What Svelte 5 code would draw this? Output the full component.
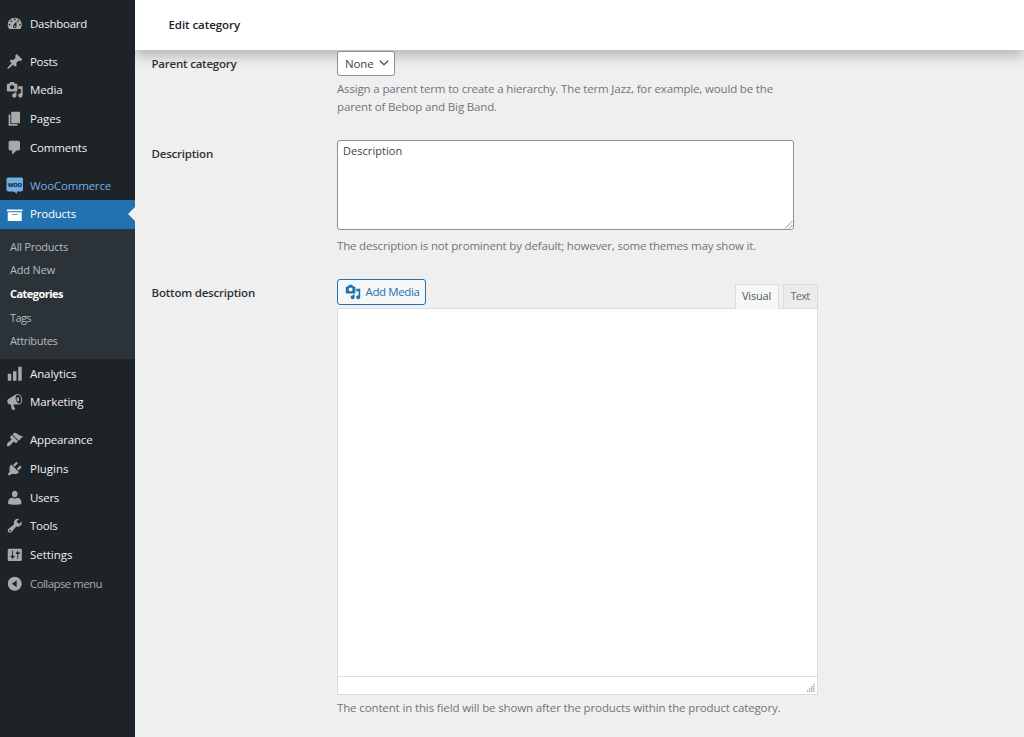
<script lang="ts">
  interface MenuItem {
    label: string;
    icon: string;
    kind?: 'woo' | 'current' | 'collapse';
    gap?: boolean;
    width: number;
  }

  const mediaIcon =
    'M13 11V4c0-.55-.45-1-1-1h-1.67L9 1H5L3.67 3H2c-.55 0-1 .45-1 1v7c0 .55.45 1 1 1h10c.55 0 1-.45 1-1zM7 4.5c1.38 0 2.5 1.12 2.5 2.5S8.38 9.5 7 9.5 4.5 8.38 4.5 7 5.62 4.5 7 4.5zM14 6h5v10.5c0 1.38-1.12 2.5-2.5 2.5S14 17.88 14 16.5s1.12-2.5 2.5-2.5c.17 0 .34.02.5.05V9h-3V6zm-4 8.05V13h2v3.5c0 1.38-1.12 2.5-2.5 2.5S7 17.88 7 16.5 8.12 14 9.5 14c.17 0 .34.02.5.05z';

  const menu: MenuItem[] = [
    {
      label: 'Dashboard',
      width: 57,
      icon: 'M3.76 16h12.48c1.1-1.37 1.76-3.11 1.76-5 0-4.42-3.58-8-8-8s-8 3.58-8 8c0 1.89.66 3.63 1.76 5zM10 4c.55 0 1 .45 1 1s-.45 1-1 1-1-.45-1-1 .45-1 1-1zM6 6c.55 0 1 .45 1 1s-.45 1-1 1-1-.45-1-1 .45-1 1-1zm8 0c.55 0 1 .45 1 1s-.45 1-1 1-1-.45-1-1 .45-1 1-1zm-5.37 5.55L12 7v6c0 1.1-.9 2-2 2s-2-.9-2-2c0-.57.24-1.08.63-1.45zM4 10c.55 0 1 .45 1 1s-.45 1-1 1-1-.45-1-1 .45-1 1-1zm12 0c.55 0 1 .45 1 1s-.45 1-1 1-1-.45-1-1 .45-1 1-1zm-5 3c0-.55-.45-1-1-1s-1 .45-1 1 .45 1 1 1 1-.45 1-1z'
    },
    {
      label: 'Posts',
      width: 27.5,
      gap: true,
      icon: 'M10.44 3.02l1.82-1.82 6.36 6.35-1.83 1.82c-1.05-.68-2.48-.57-3.41.36l-.75.75c-.92.93-1.04 2.35-.35 3.41l-1.83 1.82-2.41-2.41-2.8 2.79c-.42.42-3.38 2.71-3.8 2.29s1.86-3.39 2.28-3.81l2.79-2.79L4.1 9.36l1.83-1.82c1.05.69 2.48.57 3.4-.36l.75-.75c.93-.92 1.05-2.35.36-3.41z'
    },
    { label: 'Media', width: 32.5, icon: mediaIcon },
    { label: 'Pages', width: 31, icon: 'M6 15V2h10v13H6zm-1 1h8v2H3V5h2v11z' },
    {
      label: 'Comments',
      width: 57,
      icon: 'M5 2h9c1.1 0 2 .9 2 2v7c0 1.1-.9 2-2 2h-2l-5 5v-5H5c-1.1 0-2-.9-2-2V4c0-1.1.9-2 2-2z'
    },
    { label: 'WooCommerce', width: 81, kind: 'woo', gap: true, icon: '' },
    {
      label: 'Products',
      width: 46,
      kind: 'current',
      icon: 'M19 4v2H1V4h18zM2 7h16v10H2V7zm11 3V9H7v1h6z'
    },
    { label: 'Analytics', width: 46.5, icon: 'M18 18V2h-4v16h4zm-6 0V7H8v11h4zm-6 0v-8H2v8h4z' },
    {
      label: 'Marketing',
      width: 53.5,
      icon: 'M18.15 5.94c.46 1.62.38 3.22-.02 4.48-.42 1.28-1.26 2.18-2.3 2.48-.16.06-.26.06-.4.06-.06.02-.12.02-.18.02-.06.02-.14.02-.22.02h-6.8l2.22 5.5c.02.14-.06.26-.14.34-.08.1-.24.16-.34.16H6.95c-.1 0-.26-.06-.34-.16-.08-.08-.16-.2-.14-.34l-1-5.5H4.25l-.02-.02c-.5.06-1.08-.18-1.54-.62s-.88-1.08-1.06-1.88c-.24-.8-.2-1.56-.02-2.2.18-.62.58-1.08 1.06-1.3l.02-.02 9-5.4c.1-.06.18-.1.24-.16.06-.04.14-.08.24-.12.16-.08.28-.12.5-.18 1.04-.3 2.24.1 3.22.98s1.84 2.24 2.26 3.86zm-2.58 5.98h-.02c.4-.1.74-.34 1.04-.7.58-.7.86-1.76.86-3.04 0-.64-.1-1.3-.28-1.98-.34-1.36-1.02-2.5-1.78-3.24s-1.68-1.1-2.46-.88c-.82.22-1.4.96-1.7 2-.32 1.04-.28 2.36.06 3.72.38 1.36 1 2.5 1.8 3.24.78.74 1.62 1.1 2.48.88zm-2.54-7.08c.22-.04.42-.02.62.04.38.16.76.48 1.02 1s.42 1.2.42 1.78c0 .3-.04.56-.12.8-.18.48-.44.84-.86.94-.34.1-.8-.06-1.14-.4s-.64-.86-.78-1.5c-.18-.62-.12-1.24.02-1.72s.48-.84.82-.94z'
    },
    {
      label: 'Appearance',
      width: 62.5,
      gap: true,
      icon: 'M14.48 11.06L7.41 3.99l1.5-1.5c.5-.56 2.3-.47 3.51.32 1.21.8 1.43 1.28 2.91 2.1 1.18.64 2.45 1.26 4.45.85zm-.71.71L6.7 4.7 4.93 6.47c-.39.39-.39 1.02 0 1.41l1.06 1.06c.39.39.39 1.03 0 1.42-.6.6-1.43 1.11-2.21 1.69-.35.26-.7.53-1.01.84C1.43 14.23.4 16.08 1.4 17.07c.99 1 2.84-.03 4.18-1.36.31-.31.58-.66.85-1.02.57-.78 1.08-1.61 1.69-2.21.39-.39 1.02-.39 1.41 0l1.06 1.06c.39.39 1.02.39 1.41 0z'
    },
    {
      label: 'Plugins',
      width: 38.5,
      icon: 'M13.11 4.36L9.87 7.6 8 5.73l3.24-3.24c.35-.34 1.05-.2 1.56.32.52.51.66 1.21.31 1.55zm-8 1.77l.91-1.12 9.01 9.01-1.19.84c-.71.71-2.63 1.16-3.82 1.16H6.14L4.9 17.26c-.59.59-1.54.59-2.12 0-.59-.58-.59-1.53 0-2.12l1.24-1.24v-3.88c0-1.13.4-3.19 1.09-3.89zm7.26 3.97l3.24-3.24c.34-.35 1.04-.21 1.55.31.52.51.66 1.21.31 1.55l-3.24 3.25z'
    },
    {
      label: 'Users',
      width: 29,
      icon: 'M10 9.6c-2.4 0-3.2-2.1-3.2-3.8C6.8 3.6 8 2 10 2s3.2 1.6 3.2 3.8c0 1.7-.8 3.8-3.2 3.8zm0 1.5l2.9-1.1c2.5 0 4.6 2.1 4.6 4.5v2.6s-3.7 1-7.5 1-7.5-1-7.5-1v-2.6c0-2.4 2.1-4.5 4.6-4.5z'
    },
    {
      label: 'Tools',
      width: 27.5,
      icon: 'M16.68 9.77c-1.34 1.34-3.3 1.67-4.95.99l-5.41 6.52c-.99.99-2.59.99-3.58 0s-.99-2.59 0-3.57l6.52-5.42c-.68-1.65-.35-3.61.99-4.95 1.28-1.28 3.12-1.62 4.72-1.06l-2.89 2.89 2.82 2.82 2.86-2.87c.53 1.58.18 3.39-1.08 4.65zM3.81 16.21c.4.39 1.04.39 1.43 0 .4-.4.4-1.04 0-1.43-.39-.4-1.03-.4-1.43 0-.39.39-.39 1.03 0 1.43z'
    },
    {
      label: 'Settings',
      width: 42.5,
      icon: 'M18 16V4c0-.55-.45-1-1-1H3c-.55 0-1 .45-1 1v12c0 .55.45 1 1 1h14c.55 0 1-.45 1-1zM8 11h1c.55 0 1 .45 1 1s-.45 1-1 1H8v1.5c0 .28-.22.5-.5.5s-.5-.22-.5-.5V13H6c-.55 0-1-.45-1-1s.45-1 1-1h1V5.5c0-.28.22-.5.5-.5s.5.22.5.5V11zm5-2h-1c-.55 0-1-.45-1-1s.45-1 1-1h1V5.5c0-.28.22-.5.5-.5s.5.22.5.5V7h1c.55 0 1 .45 1 1s-.45 1-1 1h-1v5.5c0 .28-.22.5-.5.5s-.5-.22-.5-.5V9z'
    },
    {
      label: 'Collapse menu',
      width: 72,
      kind: 'collapse',
      icon: 'M10 2a8 8 0 1 0 0 16 8 8 0 0 0 0-16zM12.2 6v8L6.8 10z'
    }
  ];

  const submenu = [
    { label: 'All Products', width: 58 },
    { label: 'Add New', width: 45 },
    { label: 'Categories', width: 53 },
    { label: 'Tags', width: 21 },
    { label: 'Attributes', width: 47.5 }
  ];

  let description = $state('Description');
  let activeSubmenu = $state('Categories');
  let activeTab = $state('Visual');

  function fit(node: HTMLElement, width: number) {
    const apply = () => {
      node.style.letterSpacing = '0px';
      const natural = node.getBoundingClientRect().width;
      const count = node.textContent?.length ?? 1;
      node.style.letterSpacing = `${(width - natural) / count}px`;
    };
    apply();
    void document.fonts.ready.then(apply);
  }
</script>

<div class="admin">
  <nav class="sidebar">
    {#each menu as item (item.label)}
      <a class="menu-item {item.kind ?? ''}" class:gap={item.gap} href="#top">
        {#if item.kind === 'woo'}
          <svg class="menu-icon" viewBox="0 0 18 18" aria-hidden="true">
            <path d="M2.3 .5h13.4A1.8 1.8 0 0 1 17.5 2.3v10.9A1.8 1.8 0 0 1 15.7 15H11l.5 2.5L8 15H2.3A1.8 1.8 0 0 1 .5 13.2V2.3A1.8 1.8 0 0 1 2.3 .5z" />
            <text x="9" y="10.2" text-anchor="middle">WOO</text>
          </svg>
        {:else}
          <svg class="menu-icon" viewBox="0 0 20 20" aria-hidden="true">
            <path d={item.icon} fill-rule="evenodd" />
          </svg>
        {/if}
        <span use:fit={item.width}>{item.label}</span>
      </a>
      {#if item.kind === 'current'}
        <div class="submenu">
          {#each submenu as sub (sub.label)}
            <a
              href="#top"
              class:active={activeSubmenu === sub.label}
              onclick={() => (activeSubmenu = sub.label)}
            >
              <span use:fit={sub.width}>{sub.label}</span>
            </a>
          {/each}
        </div>
      {/if}
    {/each}
  </nav>

  <div class="content">
    <header class="topbar"><h1 use:fit={71.5}>Edit category</h1></header>

    <main class="form">
      <div class="row parent">
        <div class="label"><span use:fit={85}>Parent category</span></div>
        <div class="field">
          <button type="button" class="select">
            <span use:fit={28.5}>None</span>
            <svg viewBox="0 0 20 20" aria-hidden="true">
              <path d="M5 6l5 5 5-5 2 1-7 7-7-7z" />
            </svg>
          </button>
          <p class="help">
            <span use:fit={436}>Assign a parent term to create a hierarchy. The term Jazz, for example, would be the</span><br />
            <span use:fit={160}>parent of Bebop and Big Band.</span>
          </p>
        </div>
      </div>

      <div class="row description">
        <div class="label"><span use:fit={61.5}>Description</span></div>
        <div class="field">
          <div class="textarea-wrap">
            <textarea bind:value={description} aria-label="Description"></textarea>
            <svg class="grip" viewBox="0 0 9 9" aria-hidden="true">
              <path d="M1 8.5L8.5 1M5 8.5L8.5 5" />
            </svg>
          </div>
          <p class="help"><span use:fit={419}>The description is not prominent by default; however, some themes may show it.</span></p>
        </div>
      </div>

      <div class="row bottom">
        <div class="label"><span use:fit={103.5}>Bottom description</span></div>
        <div class="field">
          <div class="editor-tools">
            <button type="button" class="add-media">
              <svg viewBox="0 0 20 20" aria-hidden="true"><path d={mediaIcon} fill-rule="evenodd" /></svg>
              <span use:fit={54}>Add Media</span>
            </button>
            <div class="tabs">
              <button type="button" class="visual" class:active={activeTab === 'Visual'} onclick={() => (activeTab = 'Visual')}>
                <span use:fit={29}>Visual</span>
              </button>
              <button type="button" class="text" class:active={activeTab === 'Text'} onclick={() => (activeTab = 'Text')}>
                <span use:fit={19}>Text</span>
              </button>
            </div>
          </div>
          <div class="editor">
            <div class="editor-body"></div>
            <div class="statusbar">
              <svg viewBox="0 0 9 9" aria-hidden="true">
                <path d="M7 0h1.5v1.5H7zM4.7 2.4h1.5v1.5H4.7zM7 2.4h1.5v1.5H7zM2.4 4.8h1.5v1.5H2.4zM4.7 4.8h1.5v1.5H4.7zM7 4.8h1.5v1.5H7zM0 7.2h1.5v1.5H0zM2.4 7.2h1.5v1.5H2.4zM4.7 7.2h1.5v1.5H4.7zM7 7.2h1.5v1.5H7z" />
              </svg>
            </div>
          </div>
          <p class="help"><span use:fit={443.5}>The content in this field will be shown after the products within the product category.</span></p>
        </div>
      </div>
    </main>
  </div>
</div>

<style>
  :global(body) {
    margin: 0;
    background: #efefef;
  }

  .admin {
    display: flex;
    height: 737px;
    overflow: hidden;
    font-family: 'Segoe UI', 'Open Sans', 'Noto Sans', sans-serif;
    font-size: 11.5px;
    color: #3c434a;
  }

  .admin * {
    box-sizing: border-box;
  }

  span {
    display: inline-block;
    white-space: nowrap;
  }

  button {
    font: inherit;
    cursor: pointer;
  }

  .sidebar {
    flex: none;
    width: 134.5px;
    padding-top: 9.2px;
    background: #1d2327;
  }

  .menu-item {
    position: relative;
    display: flex;
    align-items: center;
    gap: 6.3px;
    height: 28.7px;
    padding-left: 6.2px;
    color: #f0f0f1;
    font-weight: 500;
    text-decoration: none;
  }

  .menu-item span,
  .submenu span {
    padding-bottom: 0.6px;
  }

  .menu-item.gap {
    margin-top: 9.3px;
  }

  .menu-icon {
    flex: none;
    width: 17.5px;
    height: 17.5px;
    overflow: visible;
    fill: #a7aaad;
  }

  .woo {
    color: #72aee6;
    font-weight: 400;
  }

  .woo .menu-icon {
    fill: #72aee6;
  }

  .woo text {
    fill: #1d2f42;
    font-size: 6px;
    font-weight: 800;
    letter-spacing: -0.4px;
  }

  .current {
    background: #2271b1;
    color: #fff;
  }

  .current .menu-icon {
    fill: #fff;
  }

  .current::after {
    content: '';
    position: absolute;
    right: 0;
    top: 7.3px;
    border: 7px solid transparent;
    border-left-width: 0;
    border-right-color: #efefef;
  }

  .collapse {
    color: #a7aaad;
    font-weight: 400;
  }

  .submenu {
    padding: 6px 0;
    background: #2c3338;
  }

  .submenu a {
    display: flex;
    align-items: center;
    height: 23.7px;
    padding-left: 10px;
    color: #b6babe;
    font-size: 11px;
    text-decoration: none;
  }

  .submenu a.active {
    color: #fff;
    font-weight: 700;
  }

  .content {
    flex: 1;
    min-width: 0;
    background: #efefef;
  }

  .topbar {
    display: flex;
    align-items: center;
    height: 50px;
    padding: 0 0 2px 34px;
    background: #fff;
    box-shadow: 0 6px 12px rgba(0, 0, 0, 0.24);
    clip-path: inset(0 0 -30px 0);
  }

  h1 {
    margin: 0;
    color: #1d2327;
    font-size: 11.5px;
    font-weight: 600;
    white-space: nowrap;
  }

  .form {
    padding: 1px 0 0 17px;
  }

  .row {
    display: grid;
    grid-template-columns: 185.5px 480.5px;
  }

  .label {
    padding-top: 5px;
    color: #2c3338;
    font-weight: 600;
    line-height: 17px;
  }

  .parent .label {
    padding-top: 4px;
  }

  .description {
    margin-top: 25px;
  }

  .bottom {
    margin-top: 24.5px;
  }

  .select {
    position: relative;
    display: flex;
    align-items: center;
    gap: 3px;
    width: 58px;
    height: 25px;
    padding: 0 0 1px 7px;
    border: 1px solid #8c8f94;
    border-radius: 3px;
    background: #fff;
    color: #3c434a;
  }

  .select svg {
    width: 14px;
    height: 14px;
    fill: #50575e;
  }

  .help {
    margin: 4px 0 0;
    color: #70757b;
    line-height: 17.5px;
  }

  .help span {
    vertical-align: top;
  }

  .description .help {
    margin-top: 7px;
  }

  .textarea-wrap {
    position: relative;
    width: 457px;
    height: 90px;
  }

  textarea {
    display: block;
    width: 100%;
    height: 100%;
    padding: 1px 5px;
    border: 1px solid #8c8f94;
    border-radius: 3px;
    background: #fff;
    color: #3c434a;
    font-family: inherit;
    font-size: 11px;
    line-height: 17px;
    letter-spacing: 0.05px;
    resize: none;
  }

  .grip {
    position: absolute;
    right: 1px;
    bottom: 1px;
    width: 9px;
    height: 9px;
    fill: none;
    stroke: #777;
    stroke-width: 0.8;
  }

  .editor-tools {
    display: flex;
    justify-content: space-between;
    height: 29px;
  }

  .add-media {
    display: flex;
    align-items: center;
    gap: 4.5px;
    width: 89px;
    height: 25.5px;
    padding: 0 0 0 7px;
    border: 1px solid #2271b1;
    border-radius: 3px;
    background: #f6f7f7;
    color: #2271b1;
  }

  .add-media svg {
    width: 16px;
    height: 16px;
    fill: #2271b1;
  }

  .tabs {
    display: flex;
    gap: 4px;
    padding-top: 5px;
  }

  .tabs button {
    height: 24px;
    padding: 0 0 2px;
    border: 1px solid #dcdcde;
    border-bottom: 0;
    background: #ebebeb;
    color: #646970;
    font-size: 11px;
  }

  .tabs .visual {
    width: 44px;
  }

  .tabs .text {
    width: 35px;
  }

  .tabs button.active {
    position: relative;
    height: 25px;
    padding-bottom: 3px;
    background: #f6f7f7;
    color: #50575e;
  }

  .editor {
    height: 387px;
    border: 1px solid #dcdcde;
    background: #fff;
  }

  .editor-body {
    height: 367px;
  }

  .statusbar {
    display: flex;
    align-items: flex-end;
    justify-content: flex-end;
    height: 18px;
    padding: 0 2px 2px 0;
    border-top: 1px solid #dcdcde;
  }

  .statusbar svg {
    width: 8px;
    height: 8px;
    fill: #8c8f94;
  }
</style>
